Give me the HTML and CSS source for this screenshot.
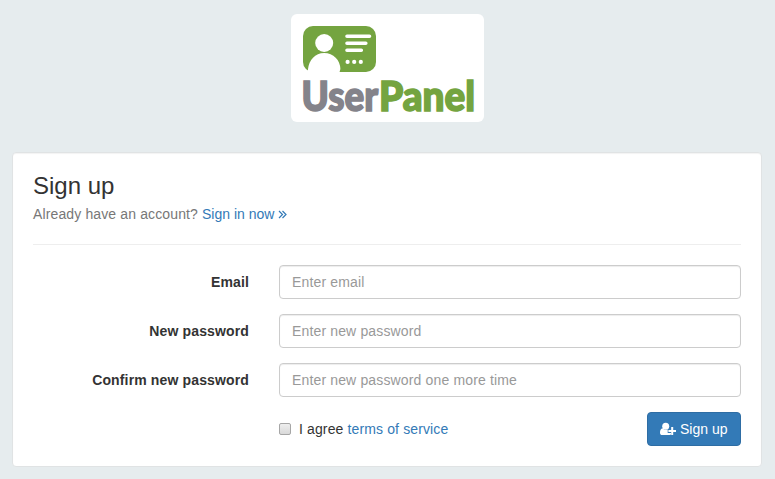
FILE: index.html
```
<!DOCTYPE html>
<html lang="en">
<head>
<meta charset="utf-8">
<title>Sign up - UserPanel</title>
<link rel="stylesheet" href="styles.css">
</head>
<body>
<header class="brand">
  <svg class="logo" width="193" height="108" viewBox="0 0 193 108" role="img" aria-label="UserPanel">
    <rect x="12" y="12" width="73" height="46" rx="10" fill="#74a440"/>
    <circle cx="33.200" cy="29" r="9" fill="#fff"/>
    <path d="M17 58.500V55c1-9 7-16 16.200-16s16 7 16.200 16l-1 3.500z" fill="#fff"/>
    <g stroke="#fff" stroke-width="3.600" stroke-linecap="round">
      <path d="M56 22.200h22.500M56 29.200h18.800M56 36.300h14.300"/>
    </g>
    <g fill="#fff"><circle cx="56.600" cy="47.900" r="2.100"/><circle cx="63.200" cy="47.900" r="2.100"/><circle cx="69.800" cy="47.900" r="2.100"/></g>
    <text class="word user" x="10.500" y="96.500" textLength="76.500" lengthAdjust="spacingAndGlyphs">User</text>
    <text class="word panel-word" x="88" y="96.500" textLength="96" lengthAdjust="spacingAndGlyphs">Panel</text>
  </svg>
</header>
<main class="card">
  <h3>Sign up</h3>
  <p class="sub"><span class="wide">Already have an account? </span><a href="#">Sign in now <svg class="angle" width="9" height="9" viewBox="0 0 9 9"><path d="M1 1l3.500 3.500L1 8M4.500 1L8 4.500 4.500 8"/></svg></a></p>
  <hr>
  <form>
    <div class="row"><label for="email">Email</label><input class="field" id="email" type="text" placeholder="Enter email"></div>
    <div class="row"><label for="pw">New password</label><input class="field" id="pw" type="password" placeholder="Enter new password"></div>
    <div class="row"><label for="pw2">Confirm new password</label><input class="field" id="pw2" type="password" placeholder="Enter new password one more time"></div>
    <div class="actions">
      <label class="agree"><input class="check" type="checkbox"><span class="wide">I agree <a href="#">terms of service</a></span></label>
      <button type="button"><svg width="16" height="14" viewBox="0 0 16 14" fill="#fff"><circle cx="5.700" cy="4.200" r="3.500"/><path d="M2.600 6.300C.8 6.300 0 8.500 0 10.700 0 12.300.8 13 2.200 13h7.300c.7 0 1.200-.2 1.500-.5V10.900H7.700V7.400c-1.600.9-3.600.4-5.100-1.100z"/><path d="M11.200 5h2v3.100H16v2h-2.800v3h-2v-3H8.400v-2h2.800z"/></svg><span>Sign up</span></button>
    </div>
  </form>
</main>
</body>
</html>
```
FILE: styles.css
```
* { box-sizing: border-box; }
body {
  margin: 0;
  padding: 14px 13px 12px 12px;
  background: #e6ecee;
  color: #333;
  font: 14px/20px "Liberation Sans", Arial, sans-serif;
}
a { color: #337ab7; text-decoration: none; }
.wide { letter-spacing: .13px; }
.brand { display: flex; justify-content: center; height: 138px; }
.logo { background: #fff; border-radius: 6px; }
.word { font: 900 41px Lato, sans-serif; stroke-width: 1.600; }
.user { fill: #84838a; stroke: #84838a; }
.panel-word { fill: #74a440; stroke: #74a440; }
.card {
  height: 315px;
  padding: 20px;
  background: #fff;
  border: 1px solid #e0e3e4;
  border-radius: 4px;
  box-shadow: inset 0 1px 1px rgba(0, 0, 0, .05);
}
h3 { margin: 0 0 5px; font-size: 24px; font-weight: 400; line-height: 26px; }
.sub { margin: 0 0 20px; color: #777; }
.angle { fill: none; stroke: #337ab7; stroke-width: 1.200; }
hr { margin: 0 0 20px; border: 0; border-top: 1px solid #eee; }
.row {
  display: grid;
  grid-template-columns: 216px 1fr;
  column-gap: 30px;
  align-items: center;
  margin-bottom: 15px;
}
.row label { text-align: right; font-weight: 700; letter-spacing: .14px; }
.field {
  width: 100%;
  height: 34px;
  padding: 6px 12px;
  border: 1px solid #ccc;
  border-radius: 4px;
  background: #fff;
  font: inherit;
  letter-spacing: .15px;
  box-shadow: inset 0 1px 1px rgba(0, 0, 0, .075);
}
.field::placeholder { color: #999; opacity: 1; }
.actions { display: flex; justify-content: space-between; align-items: center; padding-left: 246px; }
.agree { display: flex; align-items: center; gap: 8px; }
.check {
  appearance: none;
  width: 12px;
  height: 12px;
  margin: 0;
  border: 1px solid #a6a6a6;
  border-radius: 2px;
  background: linear-gradient(#eee, #d9d9d9);
}
button {
  display: flex;
  align-items: center;
  gap: 4px;
  width: 94px;
  height: 34px;
  padding: 0 12px;
  border: 1px solid #2e6da4;
  border-radius: 4px;
  background: #337ab7;
  color: #fff;
  font: inherit;
  white-space: nowrap;
}
```
